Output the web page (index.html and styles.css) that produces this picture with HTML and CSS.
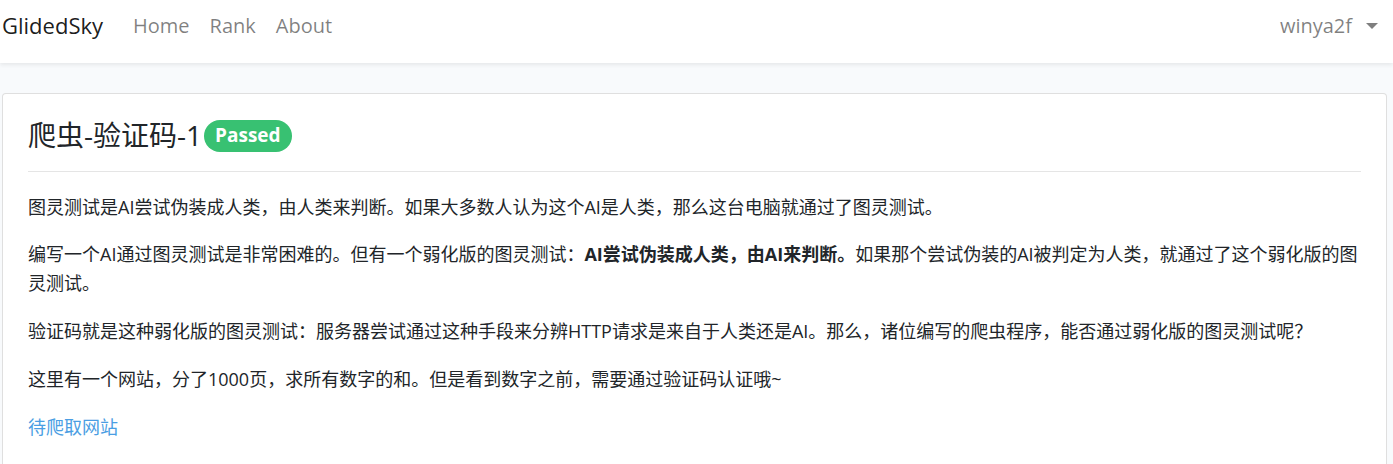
FILE: index.html
```html
<!DOCTYPE html>
<html lang="zh-CN">
<head>
    <meta charset="UTF-8">
    <meta name="viewport" content="width=device-width, initial-scale=1.0">
    <title>GlidedSky</title>
    <link rel="stylesheet" href="styles.css">
</head>
<body>
    <nav class="navbar">
        <a class="brand" href="#">GlidedSky</a>
        <ul class="nav-links">
            <li><a href="#">Home</a></li>
            <li><a href="#">Rank</a></li>
            <li><a href="#">About</a></li>
        </ul>
        <a class="user" href="#">winya2f<span class="caret"></span></a>
    </nav>

    <main class="content">
        <div class="card">
            <h3 class="card-title">爬虫-验证码-1<span class="badge">Passed</span></h3>
            <hr>
            <p>图灵测试是AI尝试伪装成人类，由人类来判断。如果大多数人认为这个AI是人类，那么这台电脑就通过了图灵测试。</p>
            <p>编写一个AI通过图灵测试是非常困难的。但有一个弱化版的图灵测试：<strong>AI尝试伪装成人类，由AI来判断。</strong>如果那个尝试伪装的AI被判定为人类，就通过了这个弱化版的图灵测试。</p>
            <p>验证码就是这种弱化版的图灵测试：服务器尝试通过这种手段来分辨HTTP请求是来自于人类还是AI。那么，诸位编写的爬虫程序，能否通过弱化版的图灵测试呢？</p>
            <p>这里有一个网站，分了1000页，求所有数字的和。但是看到数字之前，需要通过验证码认证哦~</p>
            <p><a class="link" href="#">待爬取网站</a></p>
        </div>
    </main>
</body>
</html>
```

FILE: styles.css
```css
* {
    box-sizing: border-box;
}
body {
    margin: 0;
    background-color: #f8fafc;
    color: #212529;
    font-family: "Open Sans", "Noto Sans CJK SC", sans-serif;
    font-size: 18px;
}
a {
    text-decoration: none;
}
.navbar {
    display: flex;
    align-items: center;
    height: 63px;
    padding: 0 5px 13px 2px;
    background-color: #fff;
    box-shadow: 0 2px 4px rgba(0, 0, 0, 0.075);
}
.brand {
    color: rgba(0, 0, 0, 0.9);
    font-size: 22px;
    margin-right: 20px;
}
.nav-links {
    display: flex;
    list-style: none;
    margin: 0;
    padding: 0;
    flex: 1;
}
.nav-links a,
.user {
    display: block;
    color: rgba(0, 0, 0, 0.5);
    font-size: 20px;
    padding: 0 10px;
}
.caret {
    display: inline-block;
    margin-left: 14px;
    vertical-align: 4px;
    border-top: 6px solid rgba(0, 0, 0, 0.5);
    border-left: 6px solid transparent;
    border-right: 6px solid transparent;
}
.content {
    padding: 30px 6px 0 2px;
}
.card {
    background-color: #fff;
    border: 1px solid rgba(0, 0, 0, 0.125);
    border-radius: 4px;
    padding: 25px 25px 10px;
}
.card-title {
    display: flex;
    align-items: center;
    margin: 0;
    font-size: 28px;
    font-weight: 400;
    line-height: 1.2;
}
.badge {
    margin-left: 2px;
    padding: 3px 11px 4px;
    border-radius: 16px;
    background-color: #38c172;
    color: #fff;
    font-size: 19px;
    font-weight: 700;
    line-height: 25px;
}
hr {
    margin: 18px 0 21px;
    border: 0;
    border-top: 1px solid rgba(0, 0, 0, 0.1);
}
p {
    margin: 0 0 19px;
    line-height: 28.8px;
}
.link {
    color: #4a9ee3;
}
```
